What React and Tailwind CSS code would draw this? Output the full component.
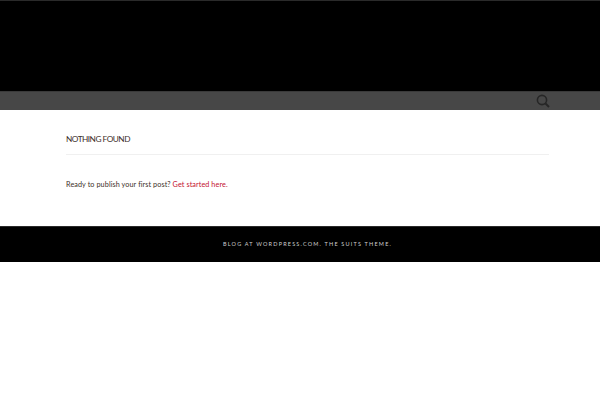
export default function App() {
  return (
    <div className="w-[600px] h-[403px] bg-white overflow-hidden font-['Lato','Open_Sans',sans-serif]">
      <header className="h-[91px] bg-black border-t border-[#2a2a2a]" />
      <nav className="h-[19px] bg-[#474747] border-t border-[#3a3a3a] flex items-center justify-end pr-[50px]">
        <svg width="14" height="14" viewBox="0 0 14 14" fill="none" stroke="#262626">
          <circle cx="6" cy="6" r="4.6" strokeWidth="1.6" />
          <path d="M9.5 9.5 L13 13" strokeWidth="2" />
        </svg>
      </nav>
      <main className="h-[116px] pl-[66px] pr-[51px]">
        <div className="pt-[23px] pb-[9px] border-b border-[#f0f0f0]">
          <h1 className="text-[8.25px] leading-[12px] tracking-[-0.5px] text-[#3d2f2a] font-normal uppercase">Nothing Found</h1>
        </div>
        <p className="mt-[24px] text-[7.25px] leading-[12px] tracking-[0.08px] text-[#3d2f2a]">
          Ready to publish your first post? <a className="text-[#c4112f]">Get started here.</a>
        </p>
      </main>
      <footer className="h-[36px] bg-black border-t border-[#2a2a2a] flex items-center justify-center pl-[15px]">
        <span className="text-[5.5px] tracking-[1.2px] uppercase text-[#cfcfcf]">Blog at WordPress.com. The Suits Theme.</span>
      </footer>
    </div>
  );
}
